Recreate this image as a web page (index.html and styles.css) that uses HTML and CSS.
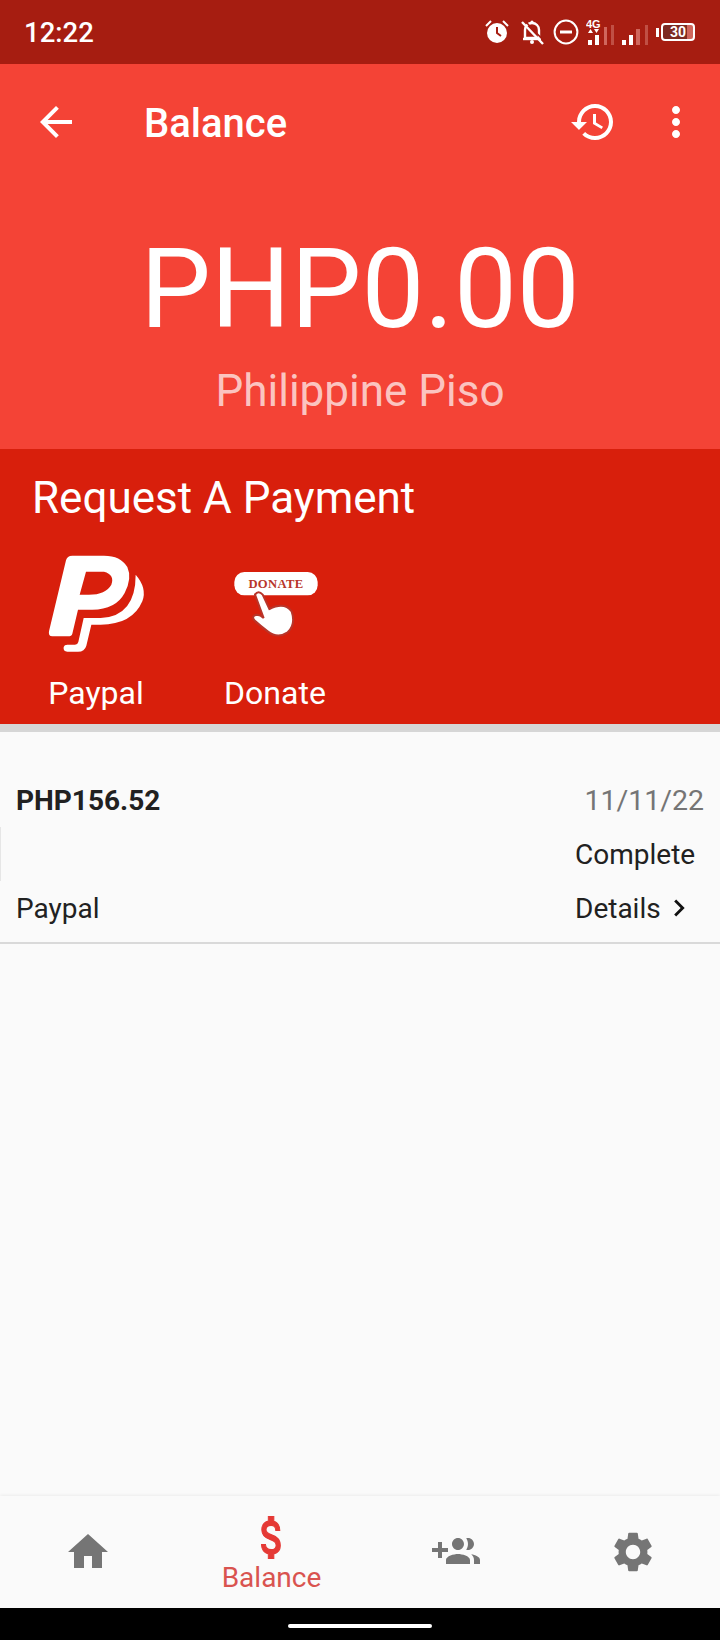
FILE: index.html
```html
<!DOCTYPE html>
<html lang="en">

<head>
    <meta charset="UTF-8">
    <meta name="viewport" content="width=device-width, initial-scale=1.0">
    <title>Balance</title>
    <link rel="stylesheet" href="styles.css">
</head>

<body>
    <div class="phone">
        <div class="status-bar">
            <span class="time">12:22</span>
            <div class="status-icons">
                <svg class="st-alarm" width="26" height="26" viewBox="0 0 26 26">
                    <circle cx="13" cy="14" r="10" fill="#fff" />
                    <path d="M13 8v6l4 3" fill="none" stroke="#a61d11" stroke-width="2" />
                    <path d="M2 7l5-5M24 7l-5-5" fill="none" stroke="#fff" stroke-width="2" />
                </svg>
                <svg class="st-bell" width="26" height="26" viewBox="0 0 26 26">
                    <path d="M6 19V11c0-4 3-7 7-7s7 3 7 7v8z" fill="none" stroke="#fff" stroke-width="2.4" />
                    <path d="M4 20h18" stroke="#fff" stroke-width="2.4" />
                    <circle cx="13" cy="23" r="2" fill="#fff" />
                    <circle cx="13" cy="3" r="1.6" fill="#fff" />
                    <path d="M3 3l21 22" stroke="#fff" stroke-width="2.4" />
                    <path d="M6 2l20 21" stroke="#a61d11" stroke-width="1.6" />
                </svg>
                <svg class="st-dnd" width="26" height="26" viewBox="0 0 26 26">
                    <circle cx="13" cy="13" r="11.4" fill="none" stroke="#fff" stroke-width="2" />
                    <path d="M7 13h12" stroke="#fff" stroke-width="3" />
                </svg>
                <svg class="st-signal" width="66" height="30" viewBox="0 0 66 30">
                    <text x="0" y="11" class="st-4g">4G</text>
                    <path d="M2 16l2.500-4 2.500 4zM8 12l2.500 4 2.500-4z" fill="#fff" />
                    <rect x="2" y="23" width="4" height="5" fill="#fff" />
                    <rect x="9" y="18" width="4" height="10" fill="#fff" />
                    <rect x="18" y="10" width="3" height="18" fill="#d0665c" />
                    <rect x="25" y="8" width="3" height="20" fill="#c04f44" />
                    <rect x="36" y="23" width="4" height="5" fill="#fff" />
                    <rect x="43" y="18" width="4" height="10" fill="#fff" />
                    <rect x="50" y="12" width="4" height="16" fill="#d0665c" />
                    <rect x="59" y="8" width="3" height="20" fill="#c04f44" />
                </svg>
                <div class="battery">
                    <span class="battery-cap"></span>
                    <span class="battery-body">30</span>
                </div>
            </div>
        </div>

        <div class="balance-head">
            <div class="app-bar">
                <svg class="icon" viewBox="0 0 24 24">
                    <path d="M20 11H7.830l5.590-5.590L12 4l-8 8 8 8 1.410-1.410L7.830 13H20v-2z" />
                </svg>
                <span class="app-title">Balance</span>
                <svg class="icon" viewBox="0 0 24 24">
                    <path d="M13 3c-4.970 0-9 4.030-9 9H1l3.890 3.890.07.14L9 12H6c0-3.870 3.130-7 7-7s7 3.130 7 7-3.130 7-7 7c-1.930 0-3.680-.79-4.940-2.060l-1.420 1.420C8.270 19.990 10.510 21 13 21c4.970 0 9-4.030 9-9s-4.030-9-9-9zm-1 5v5l4.280 2.540.72-1.210-3.500-2.080V8H12z" />
                </svg>
                <svg class="icon icon-more" viewBox="0 0 24 24">
                    <path d="M12 8c1.100 0 2-.9 2-2s-.9-2-2-2-2 .9-2 2 .9 2 2 2zm0 2c-1.100 0-2 .9-2 2s.9 2 2 2 2-.9 2-2-.9-2-2-2zm0 6c-1.100 0-2 .9-2 2s.9 2 2 2 2-.9 2-2-.9-2-2-2z" />
                </svg>
            </div>
            <div class="amount">PHP0.00</div>
            <div class="currency">Philippine Piso</div>
        </div>

        <div class="request">
            <h2 class="request-title">Request A Payment</h2>
            <div class="request-options">
                <div class="option option-paypal">
                    <svg class="option-logo" width="104" height="100" viewBox="70 70 312 300">
                        <path fill="#fff" fill-rule="evenodd" d="M136 92Q139 78 155 78H250Q300 78 320 112Q335 145 312 190Q285 240 215 240H172L155 312Q153 320 142 320H95Q82 320 85 305ZM196 126L177 195H205Q255 195 272 165Q283 135 250 126Z" />
                        <path fill="#fff" d="M345 135Q380 175 365 215Q335 285 240 285H212L197 348Q192 366 172 366H140Q127 366 129 352Q131 345 140 345H163Q171 345 173 337L189 265H240Q345 260 345 135Z" />
                    </svg>
                    <span class="option-label">Paypal</span>
                </div>
                <div class="option option-donate">
                    <svg class="option-logo" width="88" height="100" viewBox="630 70 264 300">
                        <rect x="640" y="127" width="250" height="70" rx="30" fill="#fff" />
                        <text x="765" y="174" class="donate-text">DONATE</text>
                        <path fill="#fff" stroke="#b8352a" stroke-width="6" d="M702 195Q712 180 725 195L745 238Q790 215 812 245Q825 285 800 308Q770 328 740 305Q720 290 700 272Q690 258 708 255Q718 255 728 265Z" />
                    </svg>
                    <span class="option-label">Donate</span>
                </div>
            </div>
        </div>

        <div class="tx-list">
            <div class="tx">
                <div class="tx-row tx-top">
                    <span class="tx-amount">PHP156.52</span>
                    <span class="tx-date">11/11/22</span>
                </div>
                <div class="tx-row tx-mid">
                    <span></span>
                    <span class="tx-action">Complete</span>
                </div>
                <div class="tx-row tx-bottom">
                    <span>Paypal</span>
                    <span class="tx-action tx-details">Details
                        <svg class="chevron" viewBox="0 0 24 24">
                            <path d="M8.590 16.590L13.170 12 8.590 7.410 10 6l6 6-6 6z" />
                        </svg>
                    </span>
                </div>
            </div>
        </div>

        <div class="bottom-nav">
            <div class="nav-item">
                <svg class="icon" viewBox="0 0 24 24">
                    <path d="M10 20v-6h4v6h5v-8h3L12 3 2 12h3v8z" />
                </svg>
            </div>
            <div class="nav-item active">
                <svg class="dollar" viewBox="5 3 14 18" preserveAspectRatio="none">
                    <path d="M11.800 10.900c-2.270-.59-3-1.200-3-2.150 0-1.090 1.010-1.850 2.700-1.850 1.780 0 2.440.85 2.500 2.100h2.210c-.07-1.720-1.120-3.300-3.210-3.810V3h-3v2.160c-1.940.42-3.500 1.680-3.500 3.610 0 2.310 1.910 3.460 4.700 4.130 2.500.6 3 1.480 3 2.410 0 .69-.49 1.790-2.700 1.790-2.060 0-2.870-.92-2.980-2.100h-2.200c.12 2.190 1.760 3.420 3.680 3.830V21h3v-2.150c1.950-.37 3.500-1.500 3.500-3.550 0-2.840-2.430-3.810-4.700-4.400z" />
                </svg>
                <span class="nav-label">Balance</span>
            </div>
            <div class="nav-item">
                <svg class="icon" viewBox="0 0 24 24">
                    <path d="M8 10H5V7H3v3H0v2h3v3h2v-3h3v-2zm10 1c1.660 0 2.990-1.340 2.990-3S19.660 5 18 5c-.32 0-.63.05-.91.14.57.81.9 1.790.9 2.860s-.34 2.040-.9 2.860c.28.09.59.14.91.14zm-5 0c1.660 0 2.990-1.340 2.990-3S14.660 5 13 5s-3 1.340-3 3 1.340 3 3 3zm6.620 2.160c.83.73 1.380 1.660 1.380 2.840v2h3v-2c0-1.540-2.370-2.490-4.380-2.840zM13 13c-2 0-6 1-6 3v2h12v-2c0-2-4-3-6-3z" />
                </svg>
            </div>
            <div class="nav-item">
                <svg class="icon" viewBox="0 0 24 24">
                    <path d="M19.140 12.940c.04-.3.06-.61.06-.94 0-.32-.02-.64-.07-.94l2.030-1.580c.18-.14.23-.41.12-.61l-1.920-3.320c-.12-.22-.37-.29-.59-.22l-2.390.96c-.5-.38-1.030-.7-1.620-.94l-.36-2.540c-.04-.24-.24-.41-.48-.41h-3.840c-.24 0-.43.17-.47.41l-.36 2.540c-.59.24-1.130.57-1.620.94l-2.390-.96c-.22-.08-.47 0-.59.22L2.740 8.870c-.12.21-.08.47.12.61l2.030 1.580c-.05.3-.09.63-.09.94s.02.64.07.94l-2.030 1.580c-.18.14-.23.41-.12.61l1.920 3.320c.12.22.37.29.59.22l2.390-.96c.5.38 1.030.7 1.620.94l.36 2.540c.05.24.24.41.48.41h3.840c.24 0 .44-.17.47-.41l.36-2.540c.59-.24 1.130-.56 1.620-.94l2.390.96c.22.08.47 0 .59-.22l1.920-3.320c.12-.22.07-.47-.12-.61l-2.010-1.580zM12 15.600c-1.980 0-3.600-1.620-3.600-3.600s1.620-3.600 3.600-3.600 3.600 1.620 3.600 3.600-1.620 3.600-3.600 3.600z" />
                </svg>
            </div>
        </div>

        <div class="home-bar">
            <span class="home-pill"></span>
        </div>
    </div>
</body>

</html>
```

FILE: styles.css
```css
* {
    box-sizing: border-box;
}

body {
    margin: 0;
    background-color: #000;
    font-family: Roboto, sans-serif;
}

.phone {
    width: 720px;
    height: 1640px;
    display: flex;
    flex-direction: column;
    background-color: #fafafa;
}

/* status bar */
.status-bar {
    height: 64px;
    flex: none;
    display: flex;
    align-items: center;
    justify-content: space-between;
    padding: 0 25px 0 24px;
    background-color: #a61d11;
    color: #fff;
}

.time {
    font-size: 27.5px;
    font-weight: 500;
}

.status-icons {
    display: flex;
    align-items: center;
}

.st-alarm {
    margin-right: 9px;
}

.st-bell {
    margin-right: 8px;
}

.st-dnd {
    margin-right: 7px;
}

.st-4g {
    font-family: "Liberation Sans", sans-serif;
    font-size: 11px;
    font-weight: 700;
    fill: #fff;
}

.battery {
    display: flex;
    align-items: center;
    margin-left: 4px;
}

.battery-cap {
    width: 3px;
    height: 9px;
    margin-right: 2px;
    background-color: #fff;
}

.battery-body {
    width: 34px;
    height: 18px;
    border: 2px solid #fff;
    border-radius: 4px;
    background: linear-gradient(90deg, #7d2a22 80%, #d0665c 80%);
    font-size: 14px;
    font-weight: 700;
    line-height: 14px;
    text-align: center;
    color: #fff;
}

/* red header */
.balance-head {
    height: 385px;
    flex: none;
    background-color: #f44336;
    color: #fff;
}

.app-bar {
    display: flex;
    align-items: center;
    padding: 32px 20px 0 32px;
}

.icon {
    width: 48px;
    height: 48px;
    flex: none;
    fill: currentColor;
}

.icon-more {
    margin-left: 35px;
}

.app-title {
    flex: 1;
    margin-left: 64px;
    padding-top: 4px;
    font-size: 40px;
    font-weight: 500;
}

.amount {
    margin-top: 77px;
    font-size: 112px;
    font-weight: 400;
    line-height: 130px;
    text-align: center;
}

.currency {
    margin-top: 13px;
    font-size: 44px;
    line-height: 48px;
    text-align: center;
    color: rgba(255, 255, 255, 0.7);
}

/* request section */
.request {
    height: 275px;
    flex: none;
    padding: 23px 0 0 32px;
    background-color: #d81f0c;
    color: #fff;
}

.request-title {
    margin: 0;
    font-size: 44px;
    font-weight: 400;
    line-height: 52px;
}

.request-options {
    display: flex;
    margin-top: 29px;
    padding-left: 5px;
}

.option {
    display: flex;
    flex-direction: column;
    align-items: center;
}

.option-paypal {
    width: 118px;
}

.option-donate {
    width: 118px;
    margin-left: 61px;
}

.option-label {
    margin-top: 22px;
    font-size: 32px;
    line-height: 36px;
}

.donate-text {
    font-family: "Liberation Serif", serif;
    font-size: 38px;
    font-weight: 700;
    letter-spacing: 1px;
    text-anchor: middle;
    fill: #b8352a;
}

/* transactions */
.tx-list {
    flex: 1;
    border-top: 8px solid #d6d6d6;
}

.tx {
    padding-top: 41px;
    padding-bottom: 7px;
    border-bottom: 2px solid #d9d9d9;
    color: #212121;
    font-size: 28px;
}

.tx-row {
    display: flex;
    justify-content: space-between;
    align-items: center;
    height: 54px;
    padding: 0 16px;
}

.tx-amount {
    font-weight: 700;
}

.tx-date {
    font-size: 28.5px;
    color: #757575;
}

.tx-action {
    width: 121px;
    margin-right: 8px;
}

.tx-mid {
    border-left: 1px solid #e6e6e6;
}

.tx-details {
    display: flex;
    align-items: center;
    justify-content: space-between;
}

.chevron {
    width: 34px;
    height: 34px;
    fill: #111;
}

/* bottom nav */
.bottom-nav {
    height: 112px;
    flex: none;
    display: grid;
    grid-template-columns: 176px 191px 178px 175px;
    background-color: #fafafa;
    color: #757575;
    box-shadow: 0 -1px 3px rgba(0, 0, 0, 0.06);
}

.nav-item {
    display: flex;
    flex-direction: column;
    align-items: center;
    justify-content: center;
}

.nav-item.active {
    justify-content: flex-start;
    padding-top: 20px;
    color: #e53935;
}

.dollar {
    width: 26px;
    height: 43px;
    fill: currentColor;
    stroke: currentColor;
    stroke-width: 0.5;
}

.nav-label {
    font-size: 28px;
    line-height: 34px;
    margin-top: 2px;
    color: #d9534f;
}

.home-bar {
    height: 32px;
    flex: none;
    display: flex;
    justify-content: center;
    align-items: flex-start;
    padding-top: 16px;
    background-color: #000;
}

.home-pill {
    width: 144px;
    height: 4px;
    border-radius: 2px;
    background-color: #fff;
}
```
